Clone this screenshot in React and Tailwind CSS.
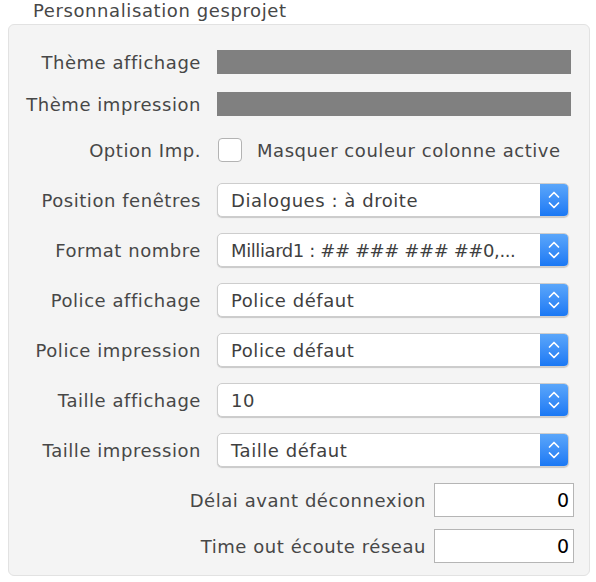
const font = { fontFamily: '"DejaVu Sans", "Liberation Sans", sans-serif' }

function Chevrons() {
  return (
    <svg width="12" height="20" viewBox="0 0 12 20" fill="none" stroke="white" strokeWidth="1.7" strokeLinecap="round" strokeLinejoin="round">
      <path d="M1.5 7 L6 2.5 L10.5 7" />
      <path d="M1.5 13 L6 17.5 L10.5 13" />
    </svg>
  )
}

function Select({ value, tight }) {
  return (
    <div className="flex h-[34px] w-[352px] overflow-hidden rounded-[5px] border border-[#cdcdcd] bg-white shadow-[0_1px_1px_rgba(0,0,0,0.18)]">
      <div
        className={`flex flex-1 items-center pl-[13px] text-[18px] text-[#3f3f3f] ${tight ? 'tracking-[-0.4px]' : 'tracking-[0.55px]'}`}
      >
        {value}
      </div>
      <div className="flex w-[28px] items-center justify-center bg-gradient-to-b from-[#5aa6fa] to-[#1a78f4]">
        <Chevrons />
      </div>
    </div>
  )
}

function Row({ label, h, children }) {
  return (
    <div className={`flex items-center ${h}`}>
      <div className="w-[192px] text-right">{label}</div>
      <div className="ml-[16px] flex items-center">{children}</div>
    </div>
  )
}

function NumberRow({ label, h }) {
  return (
    <div className={`flex items-center justify-end pr-[15px] ${h}`}>
      <span>{label}</span>
      <div className="ml-[8px] flex h-[34px] w-[140px] items-center justify-end border border-[#b5b5b5] bg-white pr-[4px] text-[19px] tracking-normal text-black">
        0
      </div>
    </div>
  )
}

export default function App() {
  const selects = [
    ['Position fenêtres', 'Dialogues : à droite'],
    ['Format nombre', 'Milliard1 : ## ### ### ##0,...', true],
    ['Police affichage', 'Police défaut'],
    ['Police impression', 'Police défaut'],
    ['Taille affichage', '10'],
    ['Taille impression', 'Taille défaut'],
  ]
  return (
    <div className="h-[582px] w-[596px] bg-white text-[18px] tracking-[0.55px] text-[#474747]" style={font}>
      <div className="h-[24px] pl-[33px] text-[18px] leading-[22px] tracking-[0.6px]">Personnalisation gesprojet</div>
      <div className="ml-[8px] h-[552px] w-[582px] rounded-[6px] border border-[#e2e2e2] bg-[#f4f4f4] pt-[16px]">
        <Row label="Thème affichage" h="h-[42px]">
          <div className="h-[24px] w-[354px] bg-[#808080]" />
        </Row>
        <Row label="Thème impression" h="h-[42px]">
          <div className="h-[24px] w-[354px] bg-[#808080]" />
        </Row>
        <Row label="Option Imp." h="h-[50px]">
          <div className="ml-[1px] h-[24px] w-[24px] rounded-[4px] border border-[#b3b3b3] bg-white" />
          <span className="ml-[15px]">Masquer couleur colonne active</span>
        </Row>
        {selects.map(([label, value, tight]) => (
          <Row key={label} label={label} h="h-[50px]">
            <Select value={value} tight={tight} />
          </Row>
        ))}
        <NumberRow label="Délai avant déconnexion" h="h-[50px]" />
        <NumberRow label="Time out écoute réseau" h="h-[42px]" />
      </div>
    </div>
  )
}
